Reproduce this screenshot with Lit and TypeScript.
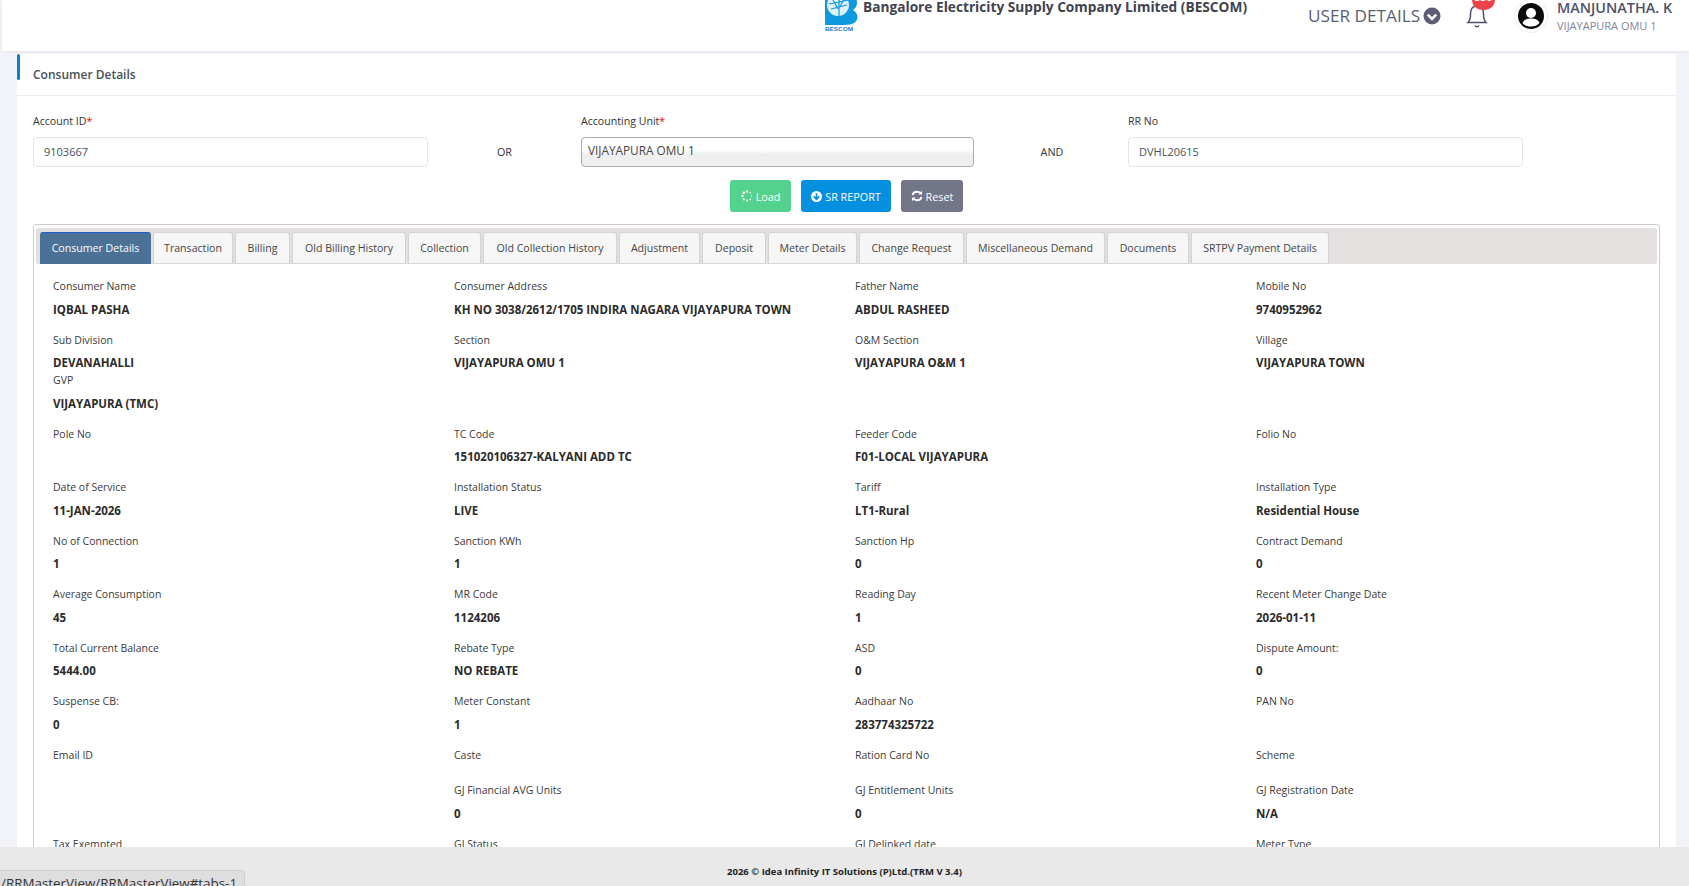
import { LitElement, html, css, svg } from "lit";
import { customElement } from "lit/decorators.js";
import { styleMap } from "lit/directives/style-map.js";

type Item = [string, string];
const ROWS: Item[][][] = [
  [[["Consumer Name","IQBAL PASHA"]],[["Consumer Address","KH NO 3038/2612/1705 INDIRA NAGARA VIJAYAPURA TOWN"]],[["Father Name","ABDUL RASHEED"]],[["Mobile No","9740952962"]]],
  [[["Sub Division","DEVANAHALLI"],["GVP","VIJAYAPURA (TMC)"]],[["Section","VIJAYAPURA OMU 1"]],[["O&M Section","VIJAYAPURA O&M 1"]],[["Village","VIJAYAPURA TOWN"]]],
  [[["Pole No",""]],[["TC Code","151020106327-KALYANI ADD TC"]],[["Feeder Code","F01-LOCAL VIJAYAPURA"]],[["Folio No",""]]],
  [[["Date of Service","11-JAN-2026"]],[["Installation Status","LIVE"]],[["Tariff","LT1-Rural"]],[["Installation Type","Residential House"]]],
  [[["No of Connection","1"]],[["Sanction KWh","1"]],[["Sanction Hp","0"]],[["Contract Demand","0"]]],
  [[["Average Consumption","45"]],[["MR Code","1124206"]],[["Reading Day","1"]],[["Recent Meter Change Date","2026-01-11"]]],
  [[["Total Current Balance","5444.00"]],[["Rebate Type","NO REBATE"]],[["ASD","0"]],[["Dispute Amount:","0"]]],
  [[["Suspense CB:","0"]],[["Meter Constant","1"]],[["Aadhaar No","283774325722"]],[["PAN No",""]]],
  [[["Email ID",""]],[["Caste",""]],[["Ration Card No",""]],[["Scheme",""]]],
  [[],[["GJ Financial AVG Units","0"]],[["GJ Entitlement Units","0"]],[["GJ Registration Date","N/A"]]],
  [[["Tax Exempted",""]],[["GJ Status",""]],[["GJ Delinked date",""]],[["Meter Type",""]]],
];
const TABS: [string, number][] = [["Consumer Details",111],["Transaction",80],["Billing",55],["Old Billing History",114],["Collection",73],["Old Collection History",134],["Adjustment",81],["Deposit",64],["Meter Details",89],["Change Request",105],["Miscellaneous Demand",139],["Documents",82],["SRTPV Payment Details",138]];

const logo = svg`<svg width="33" height="36" viewBox="0 0 33 36"><path fill="#0f9ae0" d="M0 -4H22C29 -4 32 1 32 6C32 9 30.500 11.500 28 13C30.500 14.500 32.500 17 32.500 20C32.500 25 28 28 20 28H0Z"/><circle cx="13" cy="8" r="11" fill="#dff1fb"/><path d="M14 -3V19M4 7L24 3M6 12L22 8M8 3L13 12M20 0L15 10" stroke="#0f9ae0" stroke-width="1.200" fill="none"/><text x="0" y="33.500" font-size="5.200" font-weight="800" fill="#1b7fc4" font-family="'Liberation Sans', sans-serif" textLength="28" lengthAdjust="spacingAndGlyphs">BESCOM</text></svg>`;
const chevron = svg`<svg width="18" height="18" viewBox="0 0 18 18"><circle cx="9" cy="9" r="8.500" fill="#5b5e72"/><path d="M4.800 7.600L9 11.800L13.200 7.600" stroke="#fff" stroke-width="2.600" fill="none"/></svg>`;
const bell = svg`<svg width="22" height="26" viewBox="0 0 22 26"><path d="M2 20.500H20C18 18.500 17.500 16.500 17.500 12C17.500 7 15 4 11 4C7 4 4.500 7 4.500 12C4.500 16.500 4 18.500 2 20.500Z" fill="none" stroke="#4e5266" stroke-width="1.500"/><path d="M9 23.500C9.500 25 12.500 25 13 23.500" fill="none" stroke="#4e5266" stroke-width="1.500"/></svg>`;
const avatar = svg`<svg width="26" height="26" viewBox="0 0 26 26"><circle cx="13" cy="13" r="13" fill="#0a0a0a"/><circle cx="13" cy="10" r="5" fill="#fff"/><path d="M4.500 20C6 16.500 9 15.500 13 15.500C17 15.500 20 16.500 21.500 20C19.500 22.500 16.500 23.500 13 23.500C9.500 23.500 6.500 22.500 4.500 20Z" fill="#fff"/></svg>`;
const spin = svg`<svg width="12" height="12" viewBox="0 0 12 12" fill="#fff"><circle cx="6" cy="1.500" r="1.200"/><circle cx="9.300" cy="2.800" r=".8"/><circle cx="10.500" cy="6" r=".7"/><circle cx="9.300" cy="9.300" r=".9"/><circle cx="6" cy="10.500" r="1"/><circle cx="2.700" cy="9.300" r="1.100"/><circle cx="1.500" cy="6" r="1.200"/><circle cx="2.700" cy="2.700" r="1.300"/></svg>`;
const down = svg`<svg width="11" height="11" viewBox="0 0 12 12"><circle cx="6" cy="6" r="6" fill="#fff"/><path d="M6 2.500V8M3 5.800L6 9L9 5.800" stroke="#0490de" stroke-width="1.800" fill="none"/></svg>`;
const refresh = svg`<svg width="12" height="12" viewBox="0 0 12 12" fill="none" stroke="#fff" stroke-width="1.900"><path d="M1.500 5C2 3 3.800 1.700 6 1.700C7.500 1.700 8.800 2.400 9.700 3.500"/><path d="M10.500 7C10 9 8.200 10.300 6 10.300C4.500 10.300 3.200 9.600 2.300 8.500"/><path d="M11 .8V4.600H7.300Z" fill="#fff" stroke="none"/><path d="M1 11.200V7.400H4.700Z" fill="#fff" stroke="none"/></svg>`;

@customElement("app-root")
export class AppRoot extends LitElement {
  static styles = css`
    :host { display: block; height: 886px; overflow: hidden; background: #f2f3f8; font-family: "Open Sans", "Noto Sans", sans-serif; color: #333; font-size: 11px; }
    .page { height: 886px; display: flex; flex-direction: column; position: relative; overflow: hidden; }
    .header { height: 51px; flex: none; margin-left: 2px; background: #fff; box-shadow: 0 1px 3px rgba(0,0,0,.06); display: flex; overflow: hidden; color: #4e5266; }
    .logo { margin: -3px 5px 0 823px; height: 36px; flex: none; }
    .company { font-weight: 700; font-size: 13.700px; line-height: 14px; color: #3f4350; white-space: nowrap; width: 445px; }
    .user { font-size: 17.200px; line-height: 24px; margin-top: 4px; color: #5b5e72; width: 115px; white-space: nowrap; }
    .chev { margin-top: 7px; width: 43px; height: 18px; }
    .bellwrap { position: relative; width: 48px; margin-top: 2px; height: 26px; }
    .badge { position: absolute; left: 6px; top: -12px; width: 23px; height: 20px; border-radius: 10px; background: #f1414b; color: #fff; font-size: 11px; font-weight: 700; text-align: center; line-height: 14px; }
    .av { width: 34px; height: 34px; margin-top: -1px; border: 1px solid #eee; box-sizing: border-box; border-radius: 50%; display: flex; align-items: center; justify-content: center; flex: none; margin-right: 9px; }
    .who { display: flex; flex-direction: column; }
    .name { font-size: 14.400px; line-height: 16px; font-weight: 600; color: #4e5266; white-space: nowrap; }
    .sub { font-size: 11px; line-height: 14px; margin-top: 3px; color: #81859a; white-space: nowrap; }
    .main { flex: 1; min-height: 0; overflow: hidden; padding: 3px 13px 0 17px; }
    .card { background: #fff; position: relative; height: 100%; }
    .card::before { content: ""; position: absolute; left: 0; top: 0; width: 3px; height: 26px; background: #0a82c4; border-radius: 2px; }
    .card-head { height: 42px; box-sizing: border-box; padding-left: 16px; line-height: 41px; font-size: 12px; font-weight: 600; color: #495057; border-bottom: 1px solid #ebedf2; }
    .body { padding: 0 16px; }
    .form { display: grid; grid-template-columns: 395px 153px 393px 154px 395px; padding-top: 18px; }
    .lbl { font-size: 10.600px; line-height: 15px; margin-bottom: 8px; color: #333; }
    .req { color: #e00; }
    .ctl { height: 30px; box-sizing: border-box; border: 1px solid #e2e5ec; border-radius: 4px; font-size: 11px; line-height: 28px; padding-left: 10px; color: #495057; }
    .sel { border: 1px solid #aaa; padding-left: 6px; color: #444; background: linear-gradient(#fff 40%, #eee 60%, #f0f0f0); line-height: 24px; font-size: 11.800px; }
    .conj { display: flex; align-items: center; justify-content: center; height: 30px; margin-top: 22px; font-size: 10.800px; color: #333; }
    .conj.and { padding-left: 2px; }
    .btns { display: flex; gap: 10px; justify-content: flex-start; margin: 13px 0 0 697px; }
    .btn { height: 32px; box-sizing: border-box; border-radius: 3px; color: #fff; font-size: 10.800px; display: flex; align-items: center; justify-content: center; gap: 3px; white-space: nowrap; }
    .load { width: 61px; background: #52d28c; }
    .sr { width: 90px; background: #0490de; }
    .rst { width: 62px; background: #737589; }
    .tabsbox { margin-top: 12px; border: 1px solid #ccc; border-radius: 3px; padding: 3px 2px 0; height: 640px; box-sizing: border-box; }
    .tabs { height: 36px; background: #e3e0df; border-radius: 3px; padding: 4px 0 0 4px; box-sizing: border-box; display: flex; gap: 2px; }
    .tab { border: 1px solid #d3d3d3; border-bottom: 1px solid #d8d8d8; border-radius: 3px 3px 0 0; background: #f6f6f6; line-height: 30px; font-size: 10.600px; color: #454545; white-space: nowrap; box-sizing: border-box; text-align: center; flex: none; }
    .tab.on { background: #4b7196; border-color: #1c5fd0 #4b7196 #4b7196; color: #fff; }
    .grid { display: grid; grid-template-columns: repeat(4, 401px); row-gap: 13px; padding: 14px 0 0 17px; }
    .dl { display: block; font-size: 10.500px; line-height: 16px; margin-bottom: 6.500px; color: #3a3a3a; white-space: nowrap; }
    .dv { font-size: 11.500px; line-height: 18px; font-weight: 700; color: #2b2b2b; white-space: nowrap; }
    .dv:empty { display: none; }
    .footer { height: 39px; flex: none; background: #e9e9e9; text-align: center; font-size: 9.500px; font-weight: 700; color: #222; line-height: 49px; overflow: hidden; }
    .status { position: absolute; left: 0; bottom: 0; width: 245px; height: 16px; overflow: hidden; box-sizing: border-box; background: #dedede; border: 1px solid #cfcfcf; border-left: 0; border-bottom: 0; border-radius: 0 4px 0 0; font-size: 13.400px; line-height: 24px; color: #333; white-space: nowrap; padding-left: 1px; }
  `;
  private cell(items: Item[]) {
    return html`<div>${items.map(([l, v]) => html`<div><span class="dl">${l}</span><div class="dv">${v}</div></div>`)}</div>`;
  }
  render() {
    return html`<div class="page">
      <div class="header">
        <div class="logo">${logo}</div>
        <div class="company">Bangalore Electricity Supply Company Limited (BESCOM)</div>
        <div class="user">USER DETAILS</div>
        <div class="chev">${chevron}</div>
        <div class="bellwrap">${bell}<div class="badge">859</div></div>
        <div class="av">${avatar}</div>
        <div class="who"><div class="name">MANJUNATHA. K</div><div class="sub">VIJAYAPURA OMU 1</div></div>
      </div>
      <div class="main"><div class="card">
        <div class="card-head">Consumer Details</div>
        <div class="body">
          <div class="form">
            <div><div class="lbl">Account ID<span class="req">*</span></div><div class="ctl">9103667</div></div>
            <div class="conj">OR</div>
            <div><div class="lbl">Accounting Unit<span class="req">*</span></div><div class="ctl sel">VIJAYAPURA OMU 1</div></div>
            <div class="conj and">AND</div>
            <div><div class="lbl">RR No</div><div class="ctl">DVHL20615</div></div>
          </div>
          <div class="btns">
            <div class="btn load">${spin}<span>Load</span></div>
            <div class="btn sr">${down}<span>SR REPORT</span></div>
            <div class="btn rst">${refresh}<span>Reset</span></div>
          </div>
          <div class="tabsbox">
            <div class="tabs">${TABS.map(([t, w], i) => html`<div class="tab ${i === 0 ? "on" : ""}" style=${styleMap({ width: `${w}px` })}>${t}</div>`)}</div>
            <div class="grid">${ROWS.map(r => r.map(c => this.cell(c)))}</div>
          </div>
        </div>
      </div></div>
      <div class="footer">2026 © Idea Infinity IT Solutions (P)Ltd.(TRM V 3.4)</div>
      <div class="status">/RRMasterView/RRMasterView#tabs-1</div>
    </div>`;
  }
}
